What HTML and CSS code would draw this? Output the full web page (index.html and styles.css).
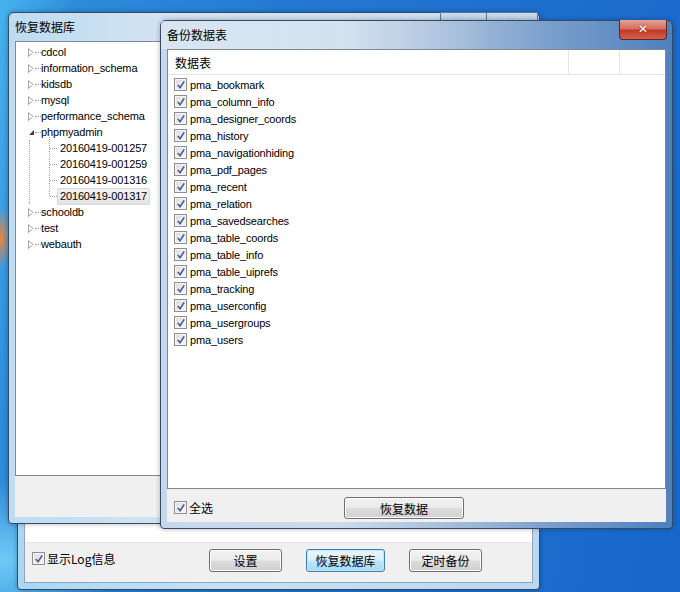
FILE: index.html
```html
<!DOCTYPE html>
<html lang="zh-CN">
<head>
  <meta charset="UTF-8">
  <meta name="viewport" content="width=device-width, initial-scale=1.0">
  <title>恢复数据库</title>
  <link rel="stylesheet" href="styles.css">
</head>
<body>
  <!-- 主窗口 (最底层) -->
  <div class="win win-main">
    <div class="main-client">
      <div class="main-top"></div>
      <div class="main-bar">
        <label class="chk log"><i class="box"><svg viewBox="0 0 11 11"><path d="M2 5.5 L4.5 8.5 L9 1.5"/></svg></i>显示Log信息</label>
        <div class="btns">
          <button class="btn w73">设置</button>
          <button class="btn w79 default">恢复数据库</button>
          <button class="btn w73">定时备份</button>
        </div>
      </div>
    </div>
  </div>

  <!-- 恢复数据库 -->
  <div class="win win-restore">
    <div class="caps">
      <span class="cap cap-max"></span>
      <span class="cap cap-close">✕</span>
    </div>
    <div class="titlebar">恢复数据库</div>
    <div class="client">
      <div class="tree">
        <div class="node"><i class="exp"></i><i class="dots"></i><span>cdcol</span></div>
        <div class="node"><i class="exp"></i><i class="dots"></i><span>information_schema</span></div>
        <div class="node"><i class="exp"></i><i class="dots"></i><span>kidsdb</span></div>
        <div class="node"><i class="exp"></i><i class="dots"></i><span>mysql</span></div>
        <div class="node"><i class="exp"></i><i class="dots"></i><span>performance_schema</span></div>
        <div class="node"><i class="exp open"></i><i class="dots"></i><span>phpmyadmin</span></div>
        <div class="children">
          <div class="leaf"><span>20160419-001257</span></div>
          <div class="leaf"><span>20160419-001259</span></div>
          <div class="leaf"><span>20160419-001316</span></div>
          <div class="leaf last"><span class="sel">20160419-001317</span></div>
        </div>
        <div class="node"><i class="exp"></i><i class="dots"></i><span>schooldb</span></div>
        <div class="node"><i class="exp"></i><i class="dots"></i><span>test</span></div>
        <div class="node"><i class="exp"></i><i class="dots"></i><span>webauth</span></div>
      </div>
      <div class="panel"></div>
    </div>
  </div>

  <!-- 备份数据表 (当前窗口) -->
  <div class="win win-backup">
    <span class="close-red">✕</span>
    <div class="titlebar">备份数据表</div>
    <div class="client">
      <div class="list">
        <div class="list-head">
          <span class="col c1">数据表</span>
          <span class="col c2"></span>
          <span class="col c3"></span>
        </div>
        <div class="rows" id="rows"></div>
      </div>
      <div class="panel foot">
        <label class="chk all"><i class="box"><svg viewBox="0 0 11 11"><path d="M2 5.5 L4.5 8.5 L9 1.5"/></svg></i>全选</label>
        <button class="btn w120">恢复数据</button>
      </div>
    </div>
  </div>

  <script>
    // 表名列表
    const tables = ['pma_bookmark', 'pma_column_info', 'pma_designer_coords', 'pma_history',
      'pma_navigationhiding', 'pma_pdf_pages', 'pma_recent', 'pma_relation', 'pma_savedsearches',
      'pma_table_coords', 'pma_table_info', 'pma_table_uiprefs', 'pma_tracking', 'pma_userconfig',
      'pma_usergroups', 'pma_users']
    const rows = document.querySelector('#rows')
    rows.innerHTML = tables.map(t =>
      `<label class="chk row"><i class="box"><svg viewBox="0 0 11 11"><path d="M2 5.5 L4.5 8.5 L9 1.5"/></svg></i>${t}</label>`
    ).join('')
  </script>
</body>
</html>
```

FILE: styles.css
```css
* {
  box-sizing: border-box;
}

body {
  margin: 0;
  width: 680px;
  height: 592px;
  overflow: hidden;
  position: relative;
  font: 11px "Liberation Sans", "Noto Sans CJK SC", sans-serif;
  letter-spacing: -0.15px;
  color: #000;
  background:
    radial-gradient(ellipse 14px 30px at 0 238px, rgba(255, 128, 40, 0.9), rgba(255, 128, 40, 0) 100%),
    radial-gradient(ellipse 120px 80px at 0 560px, rgba(120, 210, 250, 0.9), rgba(120, 210, 250, 0) 100%),
    linear-gradient(100deg, #47b3ee 0%, #2d8bda 10%, #2377d2 40%, #1767cb 100%);
}

.chk {
  display: flex;
  align-items: center;
  white-space: nowrap;
}

.box {
  width: 13px;
  height: 13px;
  border: 1px solid #8e8f8f;
  background: linear-gradient(135deg, #dcdcdc, #f8f8f8);
  box-shadow: inset 0 0 0 1px #f4f4f4;
  margin-right: 3px;
  display: flex;
  align-items: center;
  justify-content: center;
  flex: none;
}

.box svg {
  width: 10px;
  height: 10px;
}

.box path {
  fill: none;
  stroke: #4a5a93;
  stroke-width: 1.8;
}

.btn {
  height: 23px;
  border: 1px solid #707070;
  border-radius: 3px;
  background: linear-gradient(#f2f2f2 0%, #ebebeb 48%, #dddddd 52%, #cfcfcf 100%);
  box-shadow: inset 0 0 0 1px #fcfcfc;
  font: 12px "Noto Sans CJK SC", sans-serif;
  color: #000;
  padding: 0;
}

.btn.default {
  border-color: #3c7fb1;
  background: linear-gradient(#eaf6fd 0%, #d9f0fc 48%, #bee6fd 52%, #a7d9f5 100%);
  box-shadow: inset 0 0 0 1px #c5e6f8;
}

.w73 { width: 73px; }
.w79 { width: 79px; }
.w120 { width: 120px; height: 22px; }

/* 窗口通用 */
.win {
  position: absolute;
  border: 1px solid #354a63;
  border-radius: 6px 6px 4px 4px;
  padding: 0 6px 6px;
  display: flex;
  flex-direction: column;
  box-shadow: 0 0 5px rgba(0, 0, 0, 0.3);
}

.titlebar {
  height: 28px;
  flex: none;
  display: flex;
  align-items: center;
  font: 12px "Noto Sans CJK SC", sans-serif;
  letter-spacing: 0;
  color: #000;
  padding-bottom: 2px;
}

.client {
  flex: 1;
  display: flex;
  flex-direction: column;
  background: #f0f0f0;
}

.panel {
  background: #f0f0f0;
  flex: none;
}

/* 主窗口 */
.win-main {
  left: 17px;
  top: 300px;
  width: 523px;
  height: 290px;
  padding-top: 6px;
  background: linear-gradient(90deg, #a8d8f6 0%, #c6e2f6 40%, #bcd8f0 100%);
}

.main-client {
  flex: 1;
  display: flex;
  flex-direction: column;
  border: 1px solid #8aa6c0;
}

.main-top {
  flex: 1;
  background: #fff;
  border-bottom: 1px solid #e6e6e6;
}

.main-bar {
  height: 39px;
  background: #f0f0f0;
  display: flex;
  align-items: flex-start;
  padding: 6px 0 0 7px;
}

.log {
  width: 177px;
  margin-top: 1px;
  font: 12px "Noto Sans CJK SC", sans-serif;
  letter-spacing: 0;
}

.log .box {
  margin-right: 2px;
}

.btns {
  display: flex;
  gap: 24px;
}

/* 恢复数据库 */
.win-restore {
  left: 8px;
  top: 12px;
  width: 532px;
  height: 512px;
  background: linear-gradient(90deg, #bddcf2 0%, #d3e3f2 30%, #c9dcee 100%);
}

.caps {
  position: absolute;
  right: 1px;
  top: -1px;
  display: flex;
}

.cap {
  height: 19px;
  border: 1px solid #5b7291;
  background: linear-gradient(#c9dbee, #a9c4e2);
  color: #fff;
  font-size: 11px;
  text-align: center;
  line-height: 18px;
}

.cap-max {
  width: 46px;
  border-radius: 0 0 0 4px;
  border-right: none;
}

.cap-close {
  width: 52px;
  border-radius: 0 0 4px 0;
  font-weight: bold;
  text-shadow: 0 0 1px #334;
}

.tree {
  flex: 1;
  background: #fff;
  border: 1px solid #828790;
  padding: 2px 0 0 12px;
  white-space: nowrap;
  overflow: hidden;
}

.node {
  height: 16px;
  display: flex;
  align-items: center;
}

.exp {
  width: 6px;
  height: 9px;
  margin-right: 1px;
  background: url("data:image/svg+xml,%3Csvg xmlns='http://www.w3.org/2000/svg' width='6' height='9'%3E%3Cpath d='M0.5 0.5 L5 4.5 L0.5 8.5 Z' fill='%23fff' stroke='%23a6a6a6'/%3E%3C/svg%3E") no-repeat;
}

.exp.open {
  background: url("data:image/svg+xml,%3Csvg xmlns='http://www.w3.org/2000/svg' width='6' height='9'%3E%3Cpath d='M6 2 L6 7 L1 7 Z' fill='%23404040'/%3E%3C/svg%3E") no-repeat;
}

.dots {
  width: 6px;
  border-top: 1px dotted #a0a0a0;
}

.children {
  margin-left: 1px;
  border-left: 1px dotted #a0a0a0;
}

.leaf {
  height: 16px;
  display: flex;
  align-items: center;
  position: relative;
  padding-left: 27px;
}

.leaf::before {
  content: "";
  position: absolute;
  left: 19px;
  top: -3px;
  height: 19px;
  border-left: 1px dotted #a0a0a0;
}

.leaf.last::before {
  height: 11px;
}

.leaf::after {
  content: "";
  position: absolute;
  left: 20px;
  top: 8px;
  width: 7px;
  border-top: 1px dotted #a0a0a0;
}

.leaf span {
  padding: 0 2px 0 2px;
  line-height: 15px;
  border: 1px solid transparent;
}

.leaf .sel {
  background: linear-gradient(#f2f2f2, #e4e4e4);
  border-color: #d9d9d9;
  border-radius: 2px;
}

.win-restore .panel {
  height: 41px;
}

/* 备份数据表 */
.win-backup {
  left: 160px;
  top: 20px;
  width: 513px;
  height: 509px;
  background: linear-gradient(90deg, #c4d7ec 0%, #cbdbec 35%, #a3bcda 58%, #7299c9 80%, #4f80c0 100%);
}

.win-backup .titlebar {
  background: linear-gradient(90deg, rgba(255, 255, 255, 0.35), rgba(255, 255, 255, 0.15) 45%, rgba(255, 255, 255, 0) 65%);
  margin: 0 -6px;
  padding-left: 6px;
}

.close-red {
  position: absolute;
  right: 5px;
  top: -1px;
  width: 48px;
  height: 20px;
  border: 1px solid #5a2a24;
  border-top: none;
  border-radius: 0 0 4px 4px;
  background: linear-gradient(#e6a296 0%, #d56e5d 45%, #c0392b 55%, #d6604a 100%);
  color: #fff;
  font: bold 12px "DejaVu Sans", sans-serif;
  text-align: center;
  line-height: 19px;
  text-shadow: 0 0 2px #622;
  z-index: 1;
}

.list {
  flex: 1;
  background: #fff;
  border: 1px solid #828790;
  display: flex;
  flex-direction: column;
}

.list-head {
  height: 25px;
  display: flex;
  border-bottom: 1px solid #e5e5e5;
  flex: none;
}

.col {
  display: flex;
  align-items: center;
  font: 12px "Noto Sans CJK SC", sans-serif;
  letter-spacing: 0;
  border-right: 1px solid #e5e5e5;
  padding-left: 7px;
}

.c1 { width: 401px; }
.c2 { width: 51px; }
.c3 { flex: 1; border-right: none; }

.rows {
  padding: 1px 0 0 6px;
}

.row {
  height: 17px;
}

.row .box {
  margin-right: 3px;
}

.foot {
  height: 33px;
  display: flex;
  align-items: flex-start;
  padding: 8px 0 0 7px;
}

.all {
  width: 170px;
  margin-top: 2px;
  font: 12px "Noto Sans CJK SC", sans-serif;
  letter-spacing: 0;
}

.all .box {
  margin-right: 2px;
}
```
